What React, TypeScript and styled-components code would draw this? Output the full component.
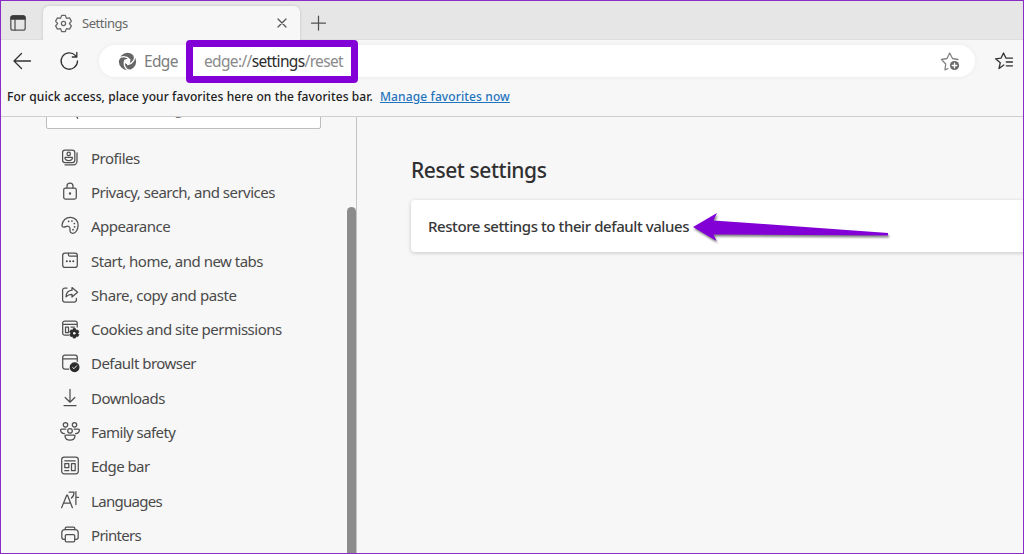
import React from 'react';
import styled, { createGlobalStyle } from 'styled-components';

const GlobalStyle = createGlobalStyle`
  * { box-sizing: border-box; }
  body { margin: 0; overflow: hidden; font-family: "Noto Sans", "Open Sans", sans-serif; }
`;

const Text = styled.span<{ $size: number; $track?: number; $weight?: number; $color?: string }>`
  font-size: ${p => p.$size}px;
  letter-spacing: ${p => p.$track ?? 0}px;
  font-weight: ${p => p.$weight ?? 400};
  color: ${p => p.$color ?? '#4a4a4a'};
  line-height: 20px;
  white-space: pre;
`;

const Window = styled.div`
  position: relative;
  display: flex;
  flex-direction: column;
  width: 1024px;
  height: 554px;
  overflow: hidden;
  background: #f7f7f7;
`;
const Outline = styled.div`
  position: absolute;
  inset: 0;
  border: 1px solid #8a2dc6;
  pointer-events: none;
`;
const TabStrip = styled.div`
  display: flex;
  flex: none;
  height: 40px;
  padding: 6px 0 0 9px;
  background: #e6e6e6;
  border-bottom: 1px solid #dedede;
`;
const StripButton = styled.div<{ $w: number }>`
  width: ${p => p.$w}px;
  height: 34px;
  display: flex;
  align-items: center;
`;
const Tab = styled.div`
  display: flex;
  align-items: center;
  width: 257px;
  height: 34px;
  padding: 0 12px 0 11px;
  border-radius: 6px 6px 0 0;
  background: #f7f7f7;
  box-shadow: 0 0 3px rgba(0, 0, 0, 0.16);
`;
const TabTitle = styled(Text)`
  flex: 1;
  margin-left: 9px;
`;
const Toolbar = styled.div`
  display: flex;
  flex: none;
  align-items: center;
  position: relative;
  height: 42px;
  padding: 0 0 0 12px;
  background: #f7f7f7;
`;
const ToolButton = styled.div<{ $w: number }>`
  display: flex;
  flex: none;
  justify-content: flex-start;
  width: ${p => p.$w}px;
`;
const AddressBar = styled.div`
  display: flex;
  flex: none;
  align-items: center;
  width: 876px;
  height: 32px;
  margin-right: 19px;
  padding: 0 14px 0 19px;
  border-radius: 16px;
  background: #fff;
  box-shadow: 0 0 5px rgba(0, 0, 0, 0.06);
`;
const BrandName = styled(Text)`
  width: 60px;
  margin-left: 7px;
`;
const Address = styled.div`
  position: relative;
  flex: 1;
  display: flex;
`;
const AddressHighlight = styled.div`
  position: absolute;
  left: -18px;
  top: -11px;
  width: 172px;
  height: 43px;
  border: 7px solid #8200d6;
  border-radius: 4px;
`;
const FavoritesBar = styled.div`
  display: flex;
  flex: none;
  align-items: center;
  gap: 7px;
  height: 35px;
  padding: 0 0 4px 7px;
  border-bottom: 1px solid #cfcfcf;
  background: #f7f7f7;
`;
const FavoritesLink = styled(Text)`
  text-decoration: underline;
  text-underline-offset: 1px;
`;
const Body = styled.div`
  display: flex;
  flex: 1;
  min-height: 0;
`;
const Sidebar = styled.div`
  display: flex;
  flex: none;
  width: 357px;
  height: 437px;
  padding-left: 46px;
  border-right: 1px solid #c4c4c4;
  overflow: hidden;
`;
const SidebarContent = styled.div`
  flex: none;
  width: 301px;
  margin-top: -31px;
`;
const SearchBox = styled.div`
  display: flex;
  align-items: center;
  width: 275px;
  height: 43px;
  padding-left: 17px;
  gap: 7px;
  border: 1px solid #bdbdbd;
  border-radius: 2px;
  background: #fff;
`;
const Nav = styled.nav`
  padding-top: 11.5px;
`;
const NavItem = styled.div`
  display: flex;
  align-items: center;
  gap: 11px;
  height: 34.3px;
  padding-left: 14px;
`;
const ScrollThumb = styled.div`
  flex: none;
  width: 9px;
  height: 360px;
  margin-top: 90px;
  border-radius: 5px;
  background: #8c8c8c;
`;
const Main = styled.main`
  flex: 1;
  padding: 40px 0 0 54px;
`;
const Heading = styled(Text)`
  display: block;
  line-height: 26px;
`;
const Card = styled.div`
  display: flex;
  align-items: center;
  position: relative;
  width: 640px;
  height: 52px;
  margin-top: 17px;
  padding-left: 17px;
  border-radius: 4px;
  background: #fff;
  box-shadow: 0 1px 4px rgba(0, 0, 0, 0.2);
`;
const Pointer = styled.svg`
  position: absolute;
  left: 281px;
  top: 10px;
  filter: drop-shadow(1px 2px 1px rgba(0, 0, 0, 0.5));
`;
const Glyph = styled.svg<{ $color?: string; $stroke?: number }>`
  flex: none;
  overflow: visible;
  fill: none;
  stroke: ${p => p.$color ?? '#505050'};
  stroke-width: ${p => p.$stroke ?? 1.25};
  stroke-linecap: round;
  stroke-linejoin: round;
`;

const gearPath = (() => {
  const pts: string[] = [];
  for (let i = 0; i < 6; i++) {
    const a = i * 60;
    ([[a - 30, 6.2], [a - 13, 8.7], [a + 13, 8.7]] as const).forEach(([deg, r]) => {
      const t = (deg * Math.PI) / 180;
      pts.push(`${(10 + r * Math.sin(t)).toFixed(2)} ${(10 - r * Math.cos(t)).toFixed(2)}`);
    });
  }
  return `M${pts.join('L')}Z`;
})();

const icons: Record<string, React.ReactNode> = {
  profiles: <>
    <rect x="2.6" y="2.2" width="12.2" height="12.4" rx="2.4" />
    <path d="M17 4.8v8.4a3.6 3.6 0 0 1-3.6 3.6H5" />
    <circle cx="8.7" cy="5.9" r="1.7" /><path d="M5 9.4h7.4c.2 2-1.2 3.3-3.7 3.3S4.8 11.4 5 9.4Z" />
  </>,
  lock: <><rect x="3.7" y="6" width="12.6" height="11" rx="1.8" /><path d="M7 5.8V4.2a3 3 0 0 1 6 0v1.6" /><circle cx="10" cy="11.500" r=".6" fill="#484848" /></>,
  palette: <>
    <path d="M2 9.3C2.200 4.500 6 1.100 10.700 1.300c4.400.2 7.500 3.700 7.400 8-.1 4.500-2.500 8-5.300 8-2 0-3-1.400-2.800-3.200.2-2.200-.5-4-2.500-4-1.500 0-2 .9-3.500 1C2.600 11.200 1.900 10.400 2 9.300Z" />
    <path d="M8.600 5.300h.1M11.900 5h.1M14.300 7.500h.1M14.600 10.800h.1M13 13.700h.1" strokeWidth="1.700" />
  </>,
  tabs: <><rect x="2.700" y="2.200" width="14.600" height="14.200" rx="2.200" /><path d="M8.500 2.400v1.600q0 1.200 1.200 1.200h7.400" /><path d="M6.800 10.200h.1M10 10.200h.1M13.200 10.200h.1" strokeWidth="2" /></>,
  share: <><path d="M7 3H4.800A2.200 2.200 0 0 0 2.600 5.200v9.600A2.200 2.200 0 0 0 4.800 17h9.400a2.200 2.200 0 0 0 2.200-2.200v-1.500" /><path d="M12 2.500 17.600 7.300 12 12V9.300c-2.700-.1-4.500.8-6 2.500.2-3.800 2.400-6.300 6-6.600Z" /></>,
  cookies: <><path d="M8.500 16.200H4.700a2 2 0 0 1-2-2V4a2 2 0 0 1 2-2h10.500a2 2 0 0 1 2 2v4M2.700 5.300h14.500" /><path d="M5.500 8h3v5.500h-3ZM11 8h3.500" /><path transform="translate(8.700 8.700) scale(.56)" d={gearPath} fill="#2b2b2b" stroke="#2b2b2b" /><circle cx="14.300" cy="14.300" r="1.300" fill="#f7f7f7" stroke="none" /></>,
  browser: <><path d="M8.800 16H4.900a2.200 2.200 0 0 1-2.200-2.200V4.300a2.200 2.200 0 0 1 2.200-2.200h10.200a2.200 2.200 0 0 1 2.200 2.200v4M2.700 5.800h14.600" /><circle cx="14.600" cy="14.200" r="4.300" fill="#2b2b2b" stroke="#2b2b2b" /><path d="m12.700 14.500 1.300 1.200 2.600-2.900" stroke="#f7f7f7" strokeWidth="1" /></>,
  downloads: <path d="M10 1.300v12.500M5.200 9.500 10 14.200l4.800-4.700M4 17.500h12" />,
  family: <>
    <circle cx="5.500" cy="2.800" r="2.200" /><circle cx="14.500" cy="2.800" r="2.200" /><circle cx="10" cy="8.800" r="2.300" />
    <path d="M5.800 7.200H1.500c-.5 0-.9.4-.9.9.1 1.900 1.600 3.300 3.800 3.600M14.200 7.200h4.300c.5 0 .9.4.9.9-.1 1.900-1.600 3.300-3.800 3.600M5.800 13.200h8.400c.5 0 .9.4.8.9-.3 2.600-2.200 4.100-5 4.100s-4.700-1.500-5-4.100c-.1-.5.3-.9.8-.9Z" />
  </>,
  edgebar: <><rect x="1.700" y="1.200" width="16.600" height="16.600" rx="2.500" /><path d="M4.800 4.800h10.400M4.800 7.700h4v4h-4ZM11.500 7.700h3.700v7h-3.700ZM4.800 14.700h4" /></>,
  languages: <><path d="M1.600 16.700 6.800 4h.6l5 12.700M3.500 12.200h7.200" /><path d="M9.200 1.200H14c0 2.900-.8 4.500-2.600 5.900M15.900.6v13M16 6.300h2.500" /></>,
  printers: <><path d="M5.300 14.300H3.800a2 2 0 0 1-2-2V7.500a3 3 0 0 1 3-3h10.400a3 3 0 0 1 3 3v4.800a2 2 0 0 1-2 2h-1.500" /><path d="M5.200 4.500V3.300c0-.8.5-1.300 1.300-1.300h7c.8 0 1.300.5 1.300 1.300v1.200" /><rect x="5.300" y="9.500" width="9.400" height="7.400" rx="1.200" /></>,
  search: <><circle cx="7" cy="11" r="5" /><path d="m10.300 15 3.400 5.300" /></>,
};

const Icon = ({ name }: { name: string }) => <Glyph width="20" height="20" viewBox="0 0 20 20">{icons[name]}</Glyph>;

const items: [string, string, number][] = [
  ['profiles', 'Profiles', -0.48],
  ['lock', 'Privacy, search, and services', -0.51],
  ['palette', 'Appearance', -0.5],
  ['tabs', 'Start, home, and new tabs', -0.5],
  ['share', 'Share, copy and paste', -0.43],
  ['cookies', 'Cookies and site permissions', -0.48],
  ['browser', 'Default browser', -0.53],
  ['downloads', 'Downloads', -0.52],
  ['family', 'Family safety', -0.57],
  ['edgebar', 'Edge bar', -0.55],
  ['languages', 'Languages', -0.7],
  ['printers', 'Printers', -0.7],
];

export default function App() {
  return (
    <Window>
      <GlobalStyle />
      <TabStrip>
        <StripButton $w={34}>
          <Glyph width="18" height="18" viewBox="0 0 18 18" $color="#555" $stroke={1.3}>
            <rect x="1.8" y="1.8" width="14.4" height="14.4" rx="2.2" />
            <path d="M6 6v10" />
            <path d="M2 5V4a2 2 0 0 1 2-2h10a2 2 0 0 1 2 2v1Z" fill="#3a3a3a" stroke="#3a3a3a" />
          </Glyph>
        </StripButton>
        <Tab>
          <Glyph width="19" height="19" viewBox="0 0 20 20" $color="#666" $stroke={1.3}>
            <path d={gearPath} /><circle cx="10" cy="10" r="2.200" />
          </Glyph>
          <TabTitle $size={13} $track={-0.45} $color="#686868">Settings</TabTitle>
          <Glyph width="12" height="12" viewBox="0 0 12 12" $color="#555"><path d="m2 2 8 8M10 2l-8 8" /></Glyph>
        </Tab>
        <StripButton $w={40}>
          <Glyph width="36" height="18" viewBox="0 0 36 18" $color="#505050"><path d="M18.500 2v14M11.500 9h14" /></Glyph>
        </StripButton>
      </TabStrip>
      <Toolbar>
        <ToolButton $w={47}><Glyph width="20" height="20" viewBox="0 0 20 20" $color="#333" $stroke={1.300}><path d="M18.500 10H2M9.500 2.500 2 10l7.500 7.500" /></Glyph></ToolButton>
        <ToolButton $w={40}><Glyph width="20" height="20" viewBox="0 0 20 20" $color="#333" $stroke={1.300}><path d="M18.500 10a8.200 8.200 0 1 1-2.200-5.600L17.600 6M17.800 1.500V6h-4.500" /></Glyph></ToolButton>
        <AddressBar>
          <Glyph width="19" height="19" viewBox="-10 -10 20 20" $color="#fff" $stroke={1.400}>
            <circle r="9.100" fill="#666" stroke="none" />
            <circle r="2.900" fill="#fff" stroke="none" />
            {[0, 120, 240].map(a => <path key={a} transform={`rotate(${a})`} d="M-9.600-2.200C-7-6-1.500-6.300 2.600-1.800" />)}
          </Glyph>
          <BrandName $size={15.5} $track={-0.65} $color="#7c7c7c">Edge</BrandName>
          <Address>
            <Text $size={15.5} $track={-0.66} $color="#8a8a8a">edge://</Text>
            <Text $size={15.5} $track={-0.62} $color="#2c2c2c">settings</Text>
            <Text $size={15.5} $track={-0.66} $color="#8a8a8a">/reset</Text>
            <AddressHighlight />
          </Address>
          <Glyph width="21" height="20" viewBox="0 0 21 20" $color="#858585" $stroke={1.300}>
            <path d="M8 17.500 5 18.800l.7-5.800L1.500 8.500 7 7.500 9.700 2l2.800 5.500 5.500 1" />
            <circle cx="14.500" cy="14.500" r="4.600" fill="#6a6a6a" stroke="none" /><path d="M14.500 12.200v4.600M12.200 14.500h4.600" stroke="#fff" />
          </Glyph>
        </AddressBar>
        <Glyph width="20" height="20" viewBox="0 0 20 20" $color="#333" $stroke={1.300}>
          <path d="M9.800 14 5 17.500l1.300-5.800L1.500 7.800l5.500-.6L9.500 2 12 7.200h6.500M12.300 11h6.200M12.300 14.800h6.200" />
        </Glyph>
      </Toolbar>
      <FavoritesBar>
        <Text $size={12} $track={0.1} $weight={550} $color="#202020">For quick access, place your favorites here on the favorites bar.</Text>
        <FavoritesLink $size={12} $track={0.12} $weight={550} $color="#1f74bd">Manage favorites now</FavoritesLink>
      </FavoritesBar>
      <Body>
        <Sidebar>
          <SidebarContent>
            <SearchBox><Icon name="search" /><Text $size={15} $track={-0.6} $color="#777">Search settings</Text></SearchBox>
            <Nav>
              {items.map(([icon, label, track]) => (
                <NavItem key={icon}><Icon name={icon} /><Text $size={15} $track={track}>{label}</Text></NavItem>
              ))}
            </Nav>
          </SidebarContent>
          <ScrollThumb />
        </Sidebar>
        <Main>
          <Heading $size={21} $track={-0.43} $weight={500} $color="#303030">Reset settings</Heading>
          <Card>
            <Text $size={15} $track={-0.42} $weight={500} $color="#383838">Restore settings to their default values</Text>
            <Pointer width="200" height="36" viewBox="0 0 200 36">
              <path d="M1 17 25 3l-3.500 7.500L196 23v2.500L21.500 24.500 24.500 31Z" fill="#8200d6" />
            </Pointer>
          </Card>
        </Main>
      </Body>
      <Outline />
    </Window>
  );
}
